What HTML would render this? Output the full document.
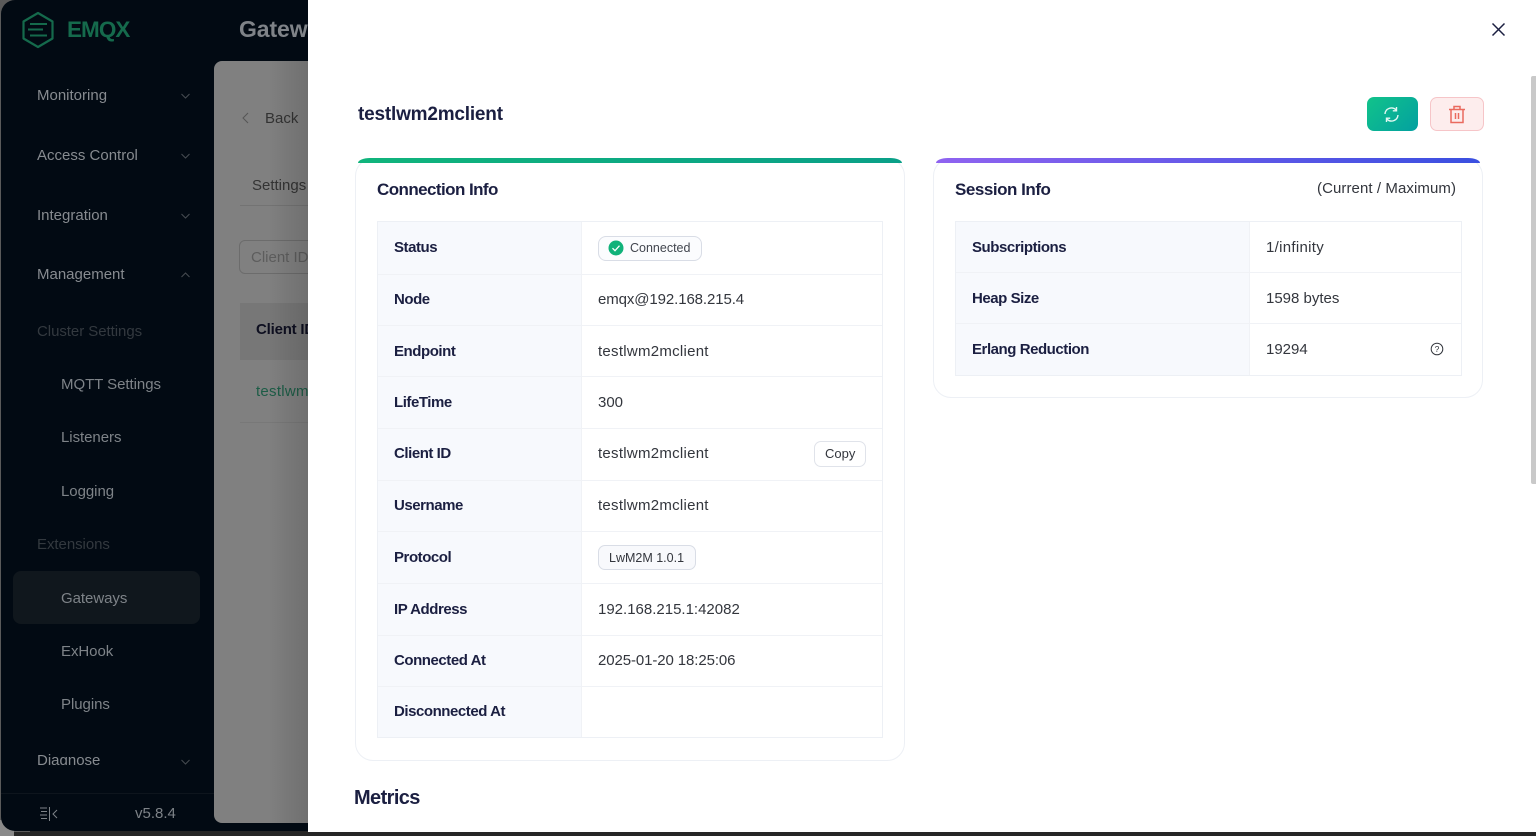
<!DOCTYPE html>
<html><head><meta charset="utf-8"><style>
*{box-sizing:border-box}
html,body{margin:0;padding:0;width:1536px;height:836px;overflow:hidden;background:#fff;font-family:"Liberation Sans",sans-serif}
.a{position:absolute;white-space:nowrap;line-height:20px}
.nav{color:#878b90;font-size:15px}
.sub{color:#7e8388;font-size:15px;letter-spacing:-.05px}
.grp{color:#33393f;font-size:15px;letter-spacing:-.05px}
.t{color:#1b1f41;font-weight:700;font-size:15px;letter-spacing:-.45px}
.v{color:#33363d;font-size:15px}
.c{letter-spacing:.27px}
.line{position:absolute;background:#f0f2f6}
</style></head><body>
<div class="a" style="left:0;top:0;width:1536px;height:836px;background:#262626"></div>
<div class="a" style="left:0;top:0;width:30px;height:832px;background:#5a5a5a"></div>
<div class="a" style="left:0;top:820px;width:14px;height:16px;background:#8a8a8a"></div>
<div class="a" style="left:14px;top:832px;width:16px;height:4px;background:#262626"></div>
<div class="a" style="left:1px;top:0;width:307px;height:831px;background:#020a13;border-radius:14px 0 0 14px"></div>
<div class="a" style="left:214px;top:61px;width:94px;height:762px;background:#808080;border-radius:8px 0 0 8px"></div>
<div class="a" style="left:1px;top:793px;width:213px;height:1px;background:#0e151d"></div>
<div class="a" style="left:13px;top:571px;width:187px;height:53px;background:#10171d;border-radius:8px"></div>

<svg class="a" style="left:21px;top:11px" width="34" height="38" viewBox="0 0 34 38" fill="none" stroke="#156a4c" stroke-linejoin="round">
<path d="M17 2L31.5 10.5V27.5L17 36L2.500 27.500V10.500Z" stroke-width="2.200"/>
<path d="M9 13H26M7 18.500H22M9 24.500H26" stroke-width="2"/></svg>
<div class="a" style="left:67px;top:17px;font-size:22.500px;line-height:26px;font-weight:700;color:#156a4c;letter-spacing:-.95px">EMQX</div>
<div class="a" style="left:239px;top:16px;font-size:23px;line-height:26px;font-weight:700;color:#7f8388;letter-spacing:-.1px;width:69px;overflow:hidden">Gateways</div>

<div class="a nav" style="left:37px;top:86px">Monitoring</div>
<div class="a nav" style="left:37px;top:146px">Access Control</div>
<div class="a nav" style="left:37px;top:206px">Integration</div>
<div class="a nav" style="left:37px;top:265px">Management</div>
<svg class="a" style="left:180px;top:92px" width="11" height="8" fill="none" stroke="#474c52"><path d="M1.500 2L5.500 6L9.500 2"/></svg>
<svg class="a" style="left:180px;top:152px" width="11" height="8" fill="none" stroke="#474c52"><path d="M1.500 2L5.500 6L9.500 2"/></svg>
<svg class="a" style="left:180px;top:212px" width="11" height="8" fill="none" stroke="#474c52"><path d="M1.500 2L5.500 6L9.500 2"/></svg>
<svg class="a" style="left:180px;top:271px" width="11" height="8" fill="none" stroke="#474c52"><path d="M1.500 6L5.500 2L9.500 6"/></svg>
<div class="a grp" style="left:37px;top:322px">Cluster Settings</div>
<div class="a sub" style="left:61px;top:375px">MQTT Settings</div>
<div class="a sub" style="left:61px;top:428px">Listeners</div>
<div class="a sub" style="left:61px;top:482px">Logging</div>
<div class="a grp" style="left:37px;top:535px">Extensions</div>
<div class="a sub" style="left:61px;top:589px">Gateways</div>
<div class="a sub" style="left:61px;top:642px">ExHook</div>
<div class="a sub" style="left:61px;top:695px">Plugins</div>
<div class="a" style="left:0;top:750px;width:214px;height:15px;overflow:hidden">
 <div class="a nav" style="left:37px;top:1px">Diagnose</div>
 <svg class="a" style="left:180px;top:8px" width="11" height="8" fill="none" stroke="#474c52"><path d="M1.500 2L5.500 6L9.500 2"/></svg>
</div>
<svg class="a" style="left:39px;top:805px" width="20" height="17" fill="none" stroke="#7e8388"><path d="M1 3H8M2 6.500H8M1 10H8M2 13.500H8M10.500 2V16M18 5L14 9L18 13"/></svg>
<div class="a" style="left:135px;top:804px;font-size:15px;color:#7e8388">v5.8.4</div>

<svg class="a" style="left:241px;top:112px" width="10" height="12" fill="none" stroke="#555"><path d="M7 1L2 6L7 11"/></svg>
<div class="a" style="left:265px;top:109px;font-size:15px;color:#333">Back</div>
<div class="a" style="left:252px;top:176px;font-size:15px;color:#333;width:56px;overflow:hidden">Settings</div>
<div class="a" style="left:240px;top:205px;width:68px;height:1px;background:#737373"></div>
<div class="a" style="left:239px;top:240px;width:80px;height:34px;border:1px solid #6c6c6c;border-radius:6px"></div>
<div class="a" style="left:251px;top:248px;font-size:15px;color:#5d5d5d;width:57px;overflow:hidden">Client ID</div>
<div class="a" style="left:240px;top:303px;width:68px;height:57px;background:#777"></div>
<div class="a" style="left:256px;top:320px;font-size:15px;font-weight:700;color:#0e0f20;width:52px;overflow:hidden;letter-spacing:-.2px">Client ID</div>
<div class="a" style="left:256px;top:382px;font-size:15px;color:#1c5c46;width:52px;overflow:hidden;letter-spacing:.27px">testlwm2mclient</div>
<div class="a" style="left:240px;top:422px;width:68px;height:1px;background:#787878"></div>
<div class="a" style="left:268px;top:61px;width:40px;height:762px;background:linear-gradient(90deg,rgba(0,0,0,0),rgba(0,0,0,.13))"></div>

<!-- drawer -->
<div class="a" style="left:308px;top:0;width:1228px;height:832px;background:#fff"></div>
<svg class="a" style="left:1491px;top:22px" width="15" height="15" fill="none" stroke="#1b1f41" stroke-width="1.500"><path d="M1.500 1.500L13.500 13.500M13.500 1.500L1.500 13.500"/></svg>
<div class="a" style="left:1531px;top:76px;width:5px;height:408px;background:#c9c9c9;border-radius:2px 0 0 2px"></div>
<div class="a" style="left:358px;top:103px;font-size:19px;line-height:24px;font-weight:700;color:#1b1f41;letter-spacing:-.2px">testlwm2mclient</div>

<div class="a" style="left:1367px;top:97px;width:51px;height:34px;border-radius:7px;background:linear-gradient(135deg,#11c38a,#03a0a0)"></div>
<svg class="a" style="left:1383px;top:106px" width="17" height="17" fill="none" stroke="#e2f8f2" stroke-width="1.400"><path d="M2 8A6.500 6.500 0 0 1 13 3.800M15 9A6.500 6.500 0 0 1 4 13.200M13.500 1V4.800H9.800M3.500 16V12.200H7.200"/></svg>
<div class="a" style="left:1430px;top:97px;width:54px;height:34px;border-radius:7px;background:#fdeded;border:1px solid #f6c5c8"></div>
<svg class="a" style="left:1448px;top:105px" width="18" height="19" fill="none" stroke="#ea6a5e" stroke-width="1.500"><path d="M1 4.500H17M6 4.500V1.500H12V4.500M3 4.500V17.500H15V4.500M7.500 8V14M10.500 8V14"/></svg>

<!-- connection card -->
<div class="a" style="left:355px;top:158px;width:550px;height:603px;border:1px solid #edf0f5;border-radius:18px;background:#fff"></div>
<div class="a" style="left:358px;top:158px;width:544px;height:5px;border-radius:12px 12px 0 0/5px 5px 0 0;background:linear-gradient(90deg,#10b47c,#0aa088)"></div>
<div class="a" style="left:377px;top:179px;font-size:17px;line-height:22px;font-weight:700;color:#1b1f41;letter-spacing:-.57px">Connection Info</div>

<div class="a" style="left:377px;top:221px;width:506px;height:517px;border:1px solid #edf0f5"></div>
<div class="a" style="left:378px;top:222px;width:203px;height:515px;background:#f7f9fd"></div>
<div class="line" style="left:581px;top:222px;width:1px;height:515px"></div>
<div class="line" style="left:378px;top:274px;width:504px;height:1px"></div>
<div class="line" style="left:378px;top:325px;width:504px;height:1px"></div>
<div class="line" style="left:378px;top:376px;width:504px;height:1px"></div>
<div class="line" style="left:378px;top:428px;width:504px;height:1px"></div>
<div class="line" style="left:378px;top:480px;width:504px;height:1px"></div>
<div class="line" style="left:378px;top:531px;width:504px;height:1px"></div>
<div class="line" style="left:378px;top:583px;width:504px;height:1px"></div>
<div class="line" style="left:378px;top:635px;width:504px;height:1px"></div>
<div class="line" style="left:378px;top:686px;width:504px;height:1px"></div>

<div class="a t" style="left:394px;top:238px">Status</div>
<div class="a t" style="left:394px;top:290px">Node</div>
<div class="a t" style="left:394px;top:342px">Endpoint</div>
<div class="a t" style="left:394px;top:393px">LifeTime</div>
<div class="a t" style="left:394px;top:444px">Client ID</div>
<div class="a t" style="left:394px;top:496px">Username</div>
<div class="a t" style="left:394px;top:548px">Protocol</div>
<div class="a t" style="left:394px;top:600px">IP Address</div>
<div class="a t" style="left:394px;top:651px">Connected At</div>
<div class="a t" style="left:394px;top:702px">Disconnected At</div>

<div class="a" style="left:598px;top:236px;width:104px;height:25px;border:1px solid #d9dde6;border-radius:8px;background:#fbfcfe"></div>
<svg class="a" style="left:608px;top:240px" width="16" height="16"><circle cx="8" cy="8" r="7.500" fill="#10b27a"/><path d="M4.500 8.200L7 10.700L11.500 5.700" fill="none" stroke="#fff" stroke-width="1.300"/></svg>
<div class="a" style="left:630px;top:238px;font-size:12.500px;color:#42464f">Connected</div>
<div class="a v" style="left:598px;top:290px;letter-spacing:-.1px">emqx@192.168.215.4</div>
<div class="a v c" style="left:598px;top:342px">testlwm2mclient</div>
<div class="a v" style="left:598px;top:393px">300</div>
<div class="a v c" style="left:598px;top:444px">testlwm2mclient</div>
<div class="a" style="left:814px;top:441px;width:52px;height:26px;border:1px solid #e0e3ea;border-radius:7px;background:#fff"></div>
<div class="a" style="left:825px;top:444px;font-size:13px;color:#33363d">Copy</div>
<div class="a v c" style="left:598px;top:496px">testlwm2mclient</div>
<div class="a" style="left:598px;top:545px;width:98px;height:25px;border:1px solid #d9dde6;border-radius:7px;background:#f8f9fc"></div>
<div class="a" style="left:609px;top:548px;font-size:12.500px;color:#33363d">LwM2M 1.0.1</div>
<div class="a v" style="left:598px;top:600px">192.168.215.1:42082</div>
<div class="a v" style="left:598px;top:651px;letter-spacing:-.1px">2025-01-20 18:25:06</div>

<!-- session card -->
<div class="a" style="left:933px;top:158px;width:550px;height:240px;border:1px solid #edf0f5;border-radius:18px;background:#fff"></div>
<div class="a" style="left:936px;top:158px;width:544px;height:5px;border-radius:12px 12px 0 0/5px 5px 0 0;background:linear-gradient(90deg,#8f63f0,#3a4fe0)"></div>
<div class="a" style="left:955px;top:179px;font-size:17px;line-height:22px;font-weight:700;color:#1b1f41;letter-spacing:-.47px">Session Info</div>
<div class="a v" style="left:1317px;top:179px;letter-spacing:.08px">(Current / Maximum)</div>
<div class="a" style="left:955px;top:221px;width:507px;height:155px;border:1px solid #edf0f5"></div>
<div class="a" style="left:956px;top:222px;width:293px;height:153px;background:#f7f9fd"></div>
<div class="line" style="left:1249px;top:222px;width:1px;height:153px"></div>
<div class="line" style="left:956px;top:272px;width:505px;height:1px"></div>
<div class="line" style="left:956px;top:323px;width:505px;height:1px"></div>
<div class="a t" style="left:972px;top:238px">Subscriptions</div>
<div class="a t" style="left:972px;top:289px">Heap Size</div>
<div class="a t" style="left:972px;top:340px">Erlang Reduction</div>
<div class="a v" style="left:1266px;top:238px;letter-spacing:.3px">1/infinity</div>
<div class="a v" style="left:1266px;top:289px">1598 bytes</div>
<div class="a v" style="left:1266px;top:340px">19294</div>
<svg class="a" style="left:1430px;top:342px" width="14" height="14" fill="none"><circle cx="7" cy="7" r="5.800" stroke="#33363d"/><text x="7" y="10" font-size="8.500" text-anchor="middle" fill="#33363d" font-family="Liberation Sans">?</text></svg>

<div class="a" style="left:354px;top:786px;font-size:20px;line-height:24px;font-weight:700;color:#1b1f41;letter-spacing:-.6px">Metrics</div>
</body></html>
